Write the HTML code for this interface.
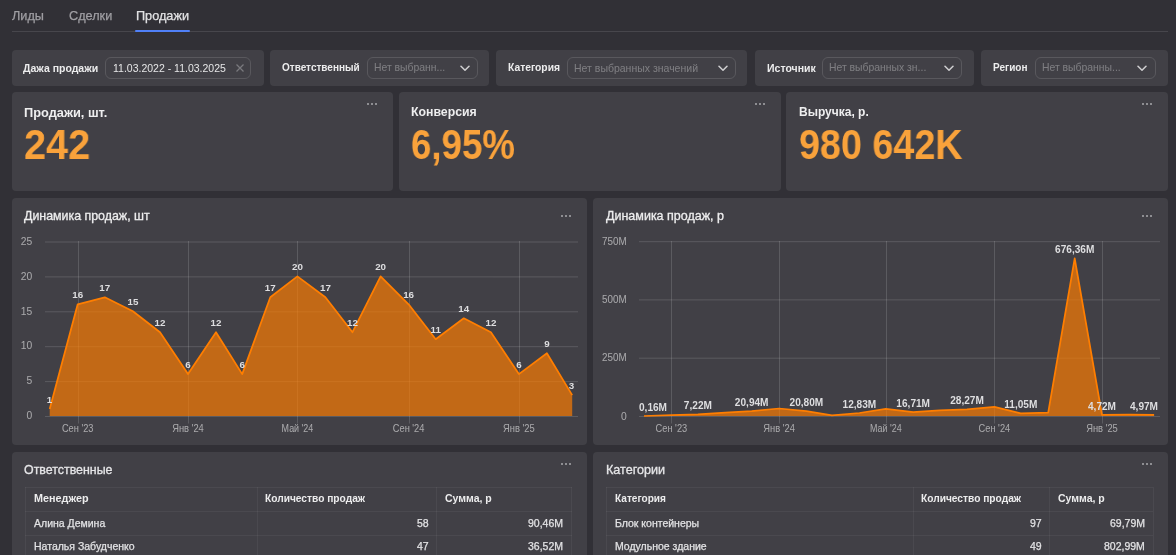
<!DOCTYPE html>
<html><head><meta charset="utf-8">
<style>
html,body{margin:0;padding:0;}
body{width:1176px;height:555px;overflow:hidden;background:#313036;font-family:"Liberation Sans",sans-serif;position:relative;color:#e6e6e7;}
.a{position:absolute;white-space:nowrap;line-height:1;}
body *{will-change:transform;}
.card{position:absolute;background:#414046;border-radius:4px;}
.tab{position:absolute;top:9.4px;font-size:12.7px;color:#a09fa4;-webkit-text-stroke:0.25px currentColor;}
.flab{position:absolute;font-weight:700;color:#ececed;font-size:10px;top:62.4px;}
.inp{position:absolute;top:56.5px;height:20.3px;border:1px solid rgba(255,255,255,0.13);border-radius:6px;}
.ph{position:absolute;font-size:10.4px;color:rgba(255,255,255,0.32);top:61.6px;}
.chev{position:absolute;}
.dots{position:absolute;width:11px;height:3px;}
.dots i{position:absolute;top:0;width:2.4px;height:2.4px;border-radius:50%;background:#a9a8ac;}
.dots i:nth-child(1){left:0} .dots i:nth-child(2){left:4px} .dots i:nth-child(3){left:8px}
.ktitle{position:absolute;font-weight:700;font-size:12.6px;color:#eeeeef;top:105px;}
.kval{position:absolute;font-weight:700;font-size:42px;color:#f9a23b;top:120.5px;transform-origin:0 0;}
.ctitle{position:absolute;font-size:12.5px;color:#eeeeef;top:209px;-webkit-text-stroke:0.3px #eeeeef;}
.ttitle{position:absolute;font-size:12.4px;color:#e6e6e8;top:462.5px;-webkit-text-stroke:0.3px #e6e6e8;}
.ax{font-size:10.3px;fill:rgba(255,255,255,0.55);font-family:"Liberation Sans",sans-serif;}
.dl{font-size:9.8px;font-weight:700;fill:#dedee0;font-family:"Liberation Sans",sans-serif;}
.tbl{position:absolute;border-collapse:collapse;}
.th{position:absolute;font-weight:700;font-size:10.4px;color:#ececed;line-height:12px;white-space:nowrap;}
.td{position:absolute;font-size:10.5px;color:#e2e2e4;line-height:12px;white-space:nowrap;-webkit-text-stroke:0.25px #e2e2e4;}
.hl{position:absolute;height:1px;background:rgba(255,255,255,0.05);}
.vl{position:absolute;width:1px;background:rgba(255,255,255,0.05);}
</style></head><body>
<!-- tabs -->
<div class="tab" style="left:12px">Лиды</div>
<div class="tab" style="left:69px">Сделки</div>
<div class="tab" style="left:135.5px;color:#e2e2e4">Продажи</div>
<div class="a" style="left:12px;top:31px;width:1156px;height:1px;background:rgba(255,255,255,0.11)"></div>
<div class="a" style="left:135px;top:30px;width:55px;height:2px;background:#5080f8;border-radius:1px"></div>

<!-- filters -->
<div class="card" style="left:12px;top:50px;width:252px;height:36px"></div>
<div class="flab" style="left:23px;font-size:10.5px">Дажа продажи</div>
<div class="inp" style="left:105px;width:144px"></div>
<div class="a" style="left:113px;top:62.7px;font-size:10.5px;color:#e6e6e7">11.03.2022 - 11.03.2025</div>
<svg class="chev" style="left:236px;top:64px" width="8" height="8" viewBox="0 0 8 8"><path d="M0.5 0.5 L7.5 7.5 M7.5 0.5 L0.5 7.5" stroke="#7a797e" stroke-width="1.25"/></svg>

<div class="card" style="left:270px;top:50px;width:219px;height:36px"></div>
<div class="flab" style="left:282px">Ответственный</div>
<div class="inp" style="left:367px;width:109px"></div>
<div class="ph" style="left:374px">Нет выбранн...</div>
<svg class="chev" style="left:460px;top:65px" width="10" height="7" viewBox="0 0 10 7"><path d="M1 1.2 L5 5.2 L9 1.2" fill="none" stroke="#d0d0d2" stroke-width="1.5" stroke-linecap="round" stroke-linejoin="round"/></svg>

<div class="card" style="left:496px;top:50px;width:251px;height:36px"></div>
<div class="flab" style="left:508px;font-size:10.3px">Категория</div>
<div class="inp" style="left:567px;width:167px"></div>
<div class="ph" style="left:574px;font-size:10.5px">Нет выбранных значений</div>
<svg class="chev" style="left:718px;top:65px" width="10" height="7" viewBox="0 0 10 7"><path d="M1 1.2 L5 5.2 L9 1.2" fill="none" stroke="#d0d0d2" stroke-width="1.5" stroke-linecap="round" stroke-linejoin="round"/></svg>

<div class="card" style="left:755px;top:50px;width:219px;height:36px"></div>
<div class="flab" style="left:767px;font-size:10.5px">Источник</div>
<div class="inp" style="left:822px;width:138px"></div>
<div class="ph" style="left:829px">Нет выбранных зн...</div>
<svg class="chev" style="left:944px;top:65px" width="10" height="7" viewBox="0 0 10 7"><path d="M1 1.2 L5 5.2 L9 1.2" fill="none" stroke="#d0d0d2" stroke-width="1.5" stroke-linecap="round" stroke-linejoin="round"/></svg>

<div class="card" style="left:981px;top:50px;width:187px;height:36px"></div>
<div class="flab" style="left:993px">Регион</div>
<div class="inp" style="left:1035px;width:119px"></div>
<div class="ph" style="left:1042px">Нет выбранны...</div>
<svg class="chev" style="left:1137px;top:65px" width="10" height="7" viewBox="0 0 10 7"><path d="M1 1.2 L5 5.2 L9 1.2" fill="none" stroke="#d0d0d2" stroke-width="1.5" stroke-linecap="round" stroke-linejoin="round"/></svg>

<!-- KPI -->
<div class="card" style="left:12px;top:92px;width:381px;height:99px"></div>
<div class="ktitle" style="left:23.5px;font-size:12.8px">Продажи, шт.</div>
<div class="kval" style="left:23.5px;transform:scaleX(0.945)">242</div>
<div class="dots" style="left:366.5px;top:103.0px"><i></i><i></i><i></i></div>
<div class="card" style="left:399px;top:92px;width:382px;height:99px"></div>
<div class="ktitle" style="left:411px;font-size:12.3px">Конверсия</div>
<div class="kval" style="left:411.3px;transform:scaleX(0.872)">6,95%</div>
<div class="dots" style="left:754.5px;top:103.0px"><i></i><i></i><i></i></div>
<div class="card" style="left:786.3px;top:92px;width:381.7px;height:99px"></div>
<div class="ktitle" style="left:799px;font-size:12px">Выручка, р.</div>
<div class="kval" style="left:799px;transform:scaleX(0.898)">980 642K</div>
<div class="dots" style="left:1141.5px;top:103.0px"><i></i><i></i><i></i></div>

<!-- charts -->
<div class="card" style="left:12px;top:198px;width:575px;height:247px"></div>
<div class="ctitle" style="left:24px;font-size:12.4px">Динамика продаж, шт</div>
<div class="dots" style="left:560.5px;top:215.4px"><i></i><i></i><i></i></div>
<div class="card" style="left:593px;top:198px;width:575px;height:247px"></div>
<div class="ctitle" style="left:606px">Динамика продаж, р</div>
<div class="dots" style="left:1141.5px;top:215.4px"><i></i><i></i><i></i></div>
<svg class="chart" width="1176" height="555" viewBox="0 0 1176 555" style="position:absolute;left:0;top:0">
<line x1="45" x2="578" y1="416.5" y2="416.5" stroke="rgba(255,255,255,0.14)" stroke-width="1"/>
<text x="32.3" y="419.2" class="ax" text-anchor="end">0</text>
<line x1="45" x2="578" y1="381.6" y2="381.6" stroke="rgba(255,255,255,0.14)" stroke-width="1"/>
<text x="32.3" y="384.3" class="ax" text-anchor="end">5</text>
<line x1="45" x2="578" y1="346.7" y2="346.7" stroke="rgba(255,255,255,0.14)" stroke-width="1"/>
<text x="32.3" y="349.4" class="ax" text-anchor="end">10</text>
<line x1="45" x2="578" y1="311.8" y2="311.8" stroke="rgba(255,255,255,0.14)" stroke-width="1"/>
<text x="32.3" y="314.5" class="ax" text-anchor="end">15</text>
<line x1="45" x2="578" y1="276.9" y2="276.9" stroke="rgba(255,255,255,0.14)" stroke-width="1"/>
<text x="32.3" y="279.6" class="ax" text-anchor="end">20</text>
<line x1="45" x2="578" y1="242.0" y2="242.0" stroke="rgba(255,255,255,0.14)" stroke-width="1"/>
<text x="32.3" y="244.7" class="ax" text-anchor="end">25</text>
<line x1="78.5" x2="78.5" y1="241" y2="423.5" stroke="rgba(255,255,255,0.14)" stroke-width="1"/>
<text x="61.9" y="432" class="ax" textLength="31.6" lengthAdjust="spacingAndGlyphs">Сен '23</text>
<line x1="188.5" x2="188.5" y1="241" y2="423.5" stroke="rgba(255,255,255,0.14)" stroke-width="1"/>
<text x="172.2" y="432" class="ax" textLength="31.6" lengthAdjust="spacingAndGlyphs">Янв '24</text>
<line x1="297.5" x2="297.5" y1="241" y2="423.5" stroke="rgba(255,255,255,0.14)" stroke-width="1"/>
<text x="281.6" y="432" class="ax" textLength="31.6" lengthAdjust="spacingAndGlyphs">Май '24</text>
<line x1="409.5" x2="409.5" y1="241" y2="423.5" stroke="rgba(255,255,255,0.14)" stroke-width="1"/>
<text x="392.8" y="432" class="ax" textLength="31.6" lengthAdjust="spacingAndGlyphs">Сен '24</text>
<line x1="519.5" x2="519.5" y1="241" y2="423.5" stroke="rgba(255,255,255,0.14)" stroke-width="1"/>
<text x="503.1" y="432" class="ax" textLength="31.6" lengthAdjust="spacingAndGlyphs">Янв '25</text>
<path d="M49.7,409.0 L77.7,304.3 L104.8,297.3 L132.9,311.3 L160.0,332.2 L188.0,374.1 L216.0,332.2 L242.2,374.1 L270.3,297.3 L297.4,276.4 L325.4,297.3 L352.5,332.2 L380.6,276.4 L408.6,304.3 L435.7,339.2 L463.8,318.3 L490.9,332.2 L518.9,374.1 L546.9,353.2 L572.2,395.1 L572.2,416 L49.7,416 Z" fill="#ff7e00" fill-opacity="0.68"/>
<path d="M49.7,409.0 L77.7,304.3 L104.8,297.3 L132.9,311.3 L160.0,332.2 L188.0,374.1 L216.0,332.2 L242.2,374.1 L270.3,297.3 L297.4,276.4 L325.4,297.3 L352.5,332.2 L380.6,276.4 L408.6,304.3 L435.7,339.2 L463.8,318.3 L490.9,332.2 L518.9,374.1 L546.9,353.2 L572.2,395.1" fill="none" stroke="#ff7e00" stroke-width="1.75" stroke-linejoin="round"/>
<text x="49.5" y="402.8" class="dl" text-anchor="middle">1</text>
<text x="77.7" y="298.1" class="dl" text-anchor="middle">16</text>
<text x="104.8" y="291.1" class="dl" text-anchor="middle">17</text>
<text x="132.9" y="305.1" class="dl" text-anchor="middle">15</text>
<text x="160.0" y="326.0" class="dl" text-anchor="middle">12</text>
<text x="188.0" y="367.9" class="dl" text-anchor="middle">6</text>
<text x="216.0" y="326.0" class="dl" text-anchor="middle">12</text>
<text x="242.2" y="367.9" class="dl" text-anchor="middle">6</text>
<text x="270.3" y="291.1" class="dl" text-anchor="middle">17</text>
<text x="297.4" y="270.2" class="dl" text-anchor="middle">20</text>
<text x="325.4" y="291.1" class="dl" text-anchor="middle">17</text>
<text x="352.5" y="326.0" class="dl" text-anchor="middle">12</text>
<text x="380.6" y="270.2" class="dl" text-anchor="middle">20</text>
<text x="408.6" y="298.1" class="dl" text-anchor="middle">16</text>
<text x="435.7" y="333.0" class="dl" text-anchor="middle">11</text>
<text x="463.8" y="312.1" class="dl" text-anchor="middle">14</text>
<text x="490.9" y="326.0" class="dl" text-anchor="middle">12</text>
<text x="518.9" y="367.9" class="dl" text-anchor="middle">6</text>
<text x="546.9" y="347.0" class="dl" text-anchor="middle">9</text>
<text x="571.5" y="388.9" class="dl" text-anchor="middle">3</text>
<line x1="639" x2="1160" y1="416.5" y2="416.5" stroke="rgba(255,255,255,0.14)" stroke-width="1"/>
<text x="626.7" y="419.6" class="ax" text-anchor="end">0</text>
<line x1="639" x2="1160" y1="358.2" y2="358.2" stroke="rgba(255,255,255,0.14)" stroke-width="1"/>
<text x="602.1" y="361.3" class="ax" textLength="24.6" lengthAdjust="spacingAndGlyphs">250M</text>
<line x1="639" x2="1160" y1="299.9" y2="299.9" stroke="rgba(255,255,255,0.14)" stroke-width="1"/>
<text x="602.1" y="303.1" class="ax" textLength="24.6" lengthAdjust="spacingAndGlyphs">500M</text>
<line x1="639" x2="1160" y1="241.7" y2="241.7" stroke="rgba(255,255,255,0.14)" stroke-width="1"/>
<text x="602.1" y="244.8" class="ax" textLength="24.6" lengthAdjust="spacingAndGlyphs">750M</text>
<line x1="671.5" x2="671.5" y1="241" y2="423.5" stroke="rgba(255,255,255,0.14)" stroke-width="1"/>
<text x="655.6" y="432" class="ax" textLength="31.6" lengthAdjust="spacingAndGlyphs">Сен '23</text>
<line x1="779.5" x2="779.5" y1="241" y2="423.5" stroke="rgba(255,255,255,0.14)" stroke-width="1"/>
<text x="763.3" y="432" class="ax" textLength="31.6" lengthAdjust="spacingAndGlyphs">Янв '24</text>
<line x1="886.5" x2="886.5" y1="241" y2="423.5" stroke="rgba(255,255,255,0.14)" stroke-width="1"/>
<text x="870.0" y="432" class="ax" textLength="31.6" lengthAdjust="spacingAndGlyphs">Май '24</text>
<line x1="994.5" x2="994.5" y1="241" y2="423.5" stroke="rgba(255,255,255,0.14)" stroke-width="1"/>
<text x="978.6" y="432" class="ax" textLength="31.6" lengthAdjust="spacingAndGlyphs">Сен '24</text>
<line x1="1102.5" x2="1102.5" y1="241" y2="423.5" stroke="rgba(255,255,255,0.14)" stroke-width="1"/>
<text x="1086.2" y="432" class="ax" textLength="31.6" lengthAdjust="spacingAndGlyphs">Янв '25</text>
<path d="M644.0,416.0 L671.4,415.2 L697.9,414.3 L725.2,412.7 L751.7,411.1 L779.1,408.5 L806.4,411.2 L832.0,415.3 L859.4,413.0 L885.8,408.8 L913.2,412.1 L939.6,410.4 L967.0,409.4 L994.4,406.9 L1020.8,413.4 L1048.2,412.7 L1074.7,258.3 L1102.0,414.9 L1129.4,414.6 L1154.1,414.8 L1154.1,416 L644.0,416 Z" fill="#ff7e00" fill-opacity="0.68"/>
<path d="M644.0,416.0 L671.4,415.2 L697.9,414.3 L725.2,412.7 L751.7,411.1 L779.1,408.5 L806.4,411.2 L832.0,415.3 L859.4,413.0 L885.8,408.8 L913.2,412.1 L939.6,410.4 L967.0,409.4 L994.4,406.9 L1020.8,413.4 L1048.2,412.7 L1074.7,258.3 L1102.0,414.9 L1129.4,414.6 L1154.1,414.8" fill="none" stroke="#ff7e00" stroke-width="1.75" stroke-linejoin="round"/>
<text x="653.0" y="410.8" class="dl" style="font-size:10.1px" text-anchor="middle">0,16M</text>
<text x="697.9" y="409.1" class="dl" style="font-size:10.1px" text-anchor="middle">7,22M</text>
<text x="751.7" y="405.9" class="dl" style="font-size:10.1px" text-anchor="middle">20,94M</text>
<text x="806.4" y="406.0" class="dl" style="font-size:10.1px" text-anchor="middle">20,80M</text>
<text x="859.4" y="407.8" class="dl" style="font-size:10.1px" text-anchor="middle">12,83M</text>
<text x="913.2" y="406.9" class="dl" style="font-size:10.1px" text-anchor="middle">16,71M</text>
<text x="967.0" y="404.2" class="dl" style="font-size:10.1px" text-anchor="middle">28,27M</text>
<text x="1020.8" y="408.2" class="dl" style="font-size:10.1px" text-anchor="middle">11,05M</text>
<text x="1074.7" y="253.1" class="dl" style="font-size:10.1px" text-anchor="middle">676,36M</text>
<text x="1102.0" y="409.7" class="dl" style="font-size:10.1px" text-anchor="middle">4,72M</text>
<text x="1144.0" y="409.6" class="dl" style="font-size:10.1px" text-anchor="middle">4,97M</text>
</svg>

<!-- tables -->
<div class="card" style="left:12px;top:452px;width:575px;height:120px"></div>
<div class="ttitle" style="left:24px">Ответственные</div>
<div class="dots" style="left:560.5px;top:463.4px"><i></i><i></i><i></i></div>
<div class="hl" style="left:24.5px;top:487.3px;width:547px"></div>
<div class="hl" style="left:25px;top:511px;width:547px"></div>
<div class="hl" style="left:25px;top:535px;width:547px"></div>
<div class="vl" style="left:24.5px;top:487px;height:80px"></div>
<div class="vl" style="left:257px;top:487px;height:80px"></div>
<div class="vl" style="left:436px;top:487px;height:80px"></div>
<div class="vl" style="left:571px;top:487px;height:80px"></div>
<div class="th" style="left:33.8px;top:492px;font-size:10.8px">Менеджер</div>
<div class="th" style="left:265px;top:492.6px;font-size:10.2px">Количество продаж</div>
<div class="th" style="left:445px;top:492px;font-size:10.5px">Сумма, р</div>
<div class="td" style="left:33.8px;top:516.5px">Алина Демина</div>
<div class="td" style="right:calc(1176px - 429px);top:516.5px">58</div>
<div class="td" style="right:calc(1176px - 563px);top:516.5px">90,46M</div>
<div class="td" style="left:33.8px;top:540.4px">Наталья Забудченко</div>
<div class="td" style="right:calc(1176px - 429px);top:540.4px">47</div>
<div class="td" style="right:calc(1176px - 563px);top:540.4px">36,52M</div>

<div class="card" style="left:593px;top:452px;width:575px;height:120px"></div>
<div class="ttitle" style="left:606px;font-size:12.6px">Категории</div>
<div class="dots" style="left:1141.5px;top:463.4px"><i></i><i></i><i></i></div>
<div class="hl" style="left:606px;top:487.3px;width:547px"></div>
<div class="hl" style="left:606px;top:511px;width:547px"></div>
<div class="hl" style="left:606px;top:535px;width:547px"></div>
<div class="vl" style="left:606px;top:487px;height:80px"></div>
<div class="vl" style="left:913px;top:487px;height:80px"></div>
<div class="vl" style="left:1049px;top:487px;height:80px"></div>
<div class="vl" style="left:1153px;top:487px;height:80px"></div>
<div class="th" style="left:615px;top:492.6px;font-size:10.1px">Категория</div>
<div class="th" style="left:921px;top:492.6px;font-size:10.2px">Количество продаж</div>
<div class="th" style="left:1058px;top:492px;font-size:10.5px">Сумма, р</div>
<div class="td" style="left:615px;top:516.5px">Блок контейнеры</div>
<div class="td" style="right:calc(1176px - 1042px);top:516.5px">97</div>
<div class="td" style="right:calc(1176px - 1145px);top:516.5px">69,79M</div>
<div class="td" style="left:615px;top:540.4px">Модульное здание</div>
<div class="td" style="right:calc(1176px - 1042px);top:540.4px">49</div>
<div class="td" style="right:calc(1176px - 1145px);top:540.4px">802,99M</div>
</body></html>
